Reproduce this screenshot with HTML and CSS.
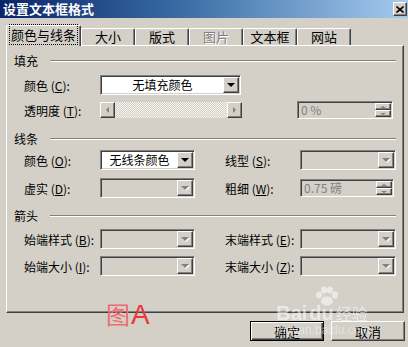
FILE: index.html
```html
<!DOCTYPE html>
<html lang="zh-CN">
<head>
    <meta charset="UTF-8">
    <title>设置文本框格式</title>
    <link rel="stylesheet" href="styles.css">
</head>
<body>

    <div class="titlebar">
        <span class="title">设置文本框格式</span>
        <span class="close">
            <svg width="8" height="7" viewBox="0 0 8 7"><path d="M0.5 0.5 L7.5 6.5 M7.5 0.5 L0.5 6.5" stroke="#000" stroke-width="1.6"/></svg>
        </span>
    </div>

    <div class="content">
        <div class="tabs">
            <div class="tab active"><span class="focus">颜色与线条</span></div>
            <div class="tab">大小</div>
            <div class="tab">版式</div>
            <div class="tab disabled">图片</div>
            <div class="tab">文本框</div>
            <div class="tab">网站</div>
        </div>

        <div class="panel">
            <!-- 填充 -->
            <div class="group-head"><span>填充</span><i class="rule"></i></div>
            <div class="row row-fill1">
                <label>颜色 (<u>C</u>):</label>
                <div class="combo wide">
                    <span class="value">无填充颜色</span>
                    <span class="drop"><i class="arrow-down"></i></span>
                </div>
            </div>
            <div class="row row-fill2">
                <label>透明度 (<u>T</u>):</label>
                <div class="slider">
                    <span class="btn"><i class="arrow-left"></i></span>
                    <span class="track"></span>
                    <span class="btn"><i class="arrow-right"></i></span>
                </div>
                <div class="spin fill-spin">
                    <span class="value">0 %</span>
                    <span class="arrows">
                        <span class="half"><i class="tiny-up"></i></span>
                        <span class="half"><i class="tiny-down"></i></span>
                    </span>
                </div>
            </div>

            <!-- 线条 -->
            <div class="group-head head-line"><span>线条</span><i class="rule"></i></div>
            <div class="grid row-line1">
                <label>颜色 (<u>O</u>):</label>
                <div class="combo">
                    <span class="value">无线条颜色</span>
                    <span class="drop"><i class="arrow-down"></i></span>
                </div>
                <label>线型 (<u>S</u>):</label>
                <div class="combo disabled">
                    <span class="value"></span>
                    <span class="drop"><i class="arrow-down"></i></span>
                </div>
            </div>
            <div class="grid row-line2">
                <label>虚实 (<u>D</u>):</label>
                <div class="combo disabled">
                    <span class="value"></span>
                    <span class="drop"><i class="arrow-down"></i></span>
                </div>
                <label>粗细 (<u>W</u>):</label>
                <div class="spin">
                    <span class="value">0.75 磅</span>
                    <span class="arrows">
                        <span class="half"><i class="tiny-up"></i></span>
                        <span class="half"><i class="tiny-down"></i></span>
                    </span>
                </div>
            </div>

            <!-- 箭头 -->
            <div class="group-head head-arrow"><span>箭头</span><i class="rule"></i></div>
            <div class="grid row-arrow1">
                <label>始端样式 (<u>B</u>):</label>
                <div class="combo disabled">
                    <span class="value"></span>
                    <span class="drop"><i class="arrow-down"></i></span>
                </div>
                <label>末端样式 (<u>E</u>):</label>
                <div class="combo disabled">
                    <span class="value"></span>
                    <span class="drop"><i class="arrow-down"></i></span>
                </div>
            </div>
            <div class="grid row-arrow2">
                <label>始端大小 (<u>I</u>):</label>
                <div class="combo disabled">
                    <span class="value"></span>
                    <span class="drop"><i class="arrow-down"></i></span>
                </div>
                <label>末端大小 (<u>Z</u>):</label>
                <div class="combo disabled">
                    <span class="value"></span>
                    <span class="drop"><i class="arrow-down"></i></span>
                </div>
            </div>
        </div>

        <div class="buttons">
            <button class="btn-default">确定</button>
            <button>取消</button>
        </div>
    </div>

    <!-- annotation and watermark over the dialog -->
    <div class="note"><span class="note-cn">图</span><span class="note-a">A</span></div>

    <div class="watermark">
        <svg class="paw" width="26" height="20" viewBox="0 0 26 20">
            <ellipse cx="5" cy="9" rx="3" ry="3.5" fill="#fff"/>
            <ellipse cx="10" cy="4" rx="3" ry="3.5" fill="#fff"/>
            <ellipse cx="16" cy="4" rx="3" ry="3.5" fill="#fff"/>
            <ellipse cx="21" cy="9" rx="3" ry="3.5" fill="#fff"/>
            <ellipse cx="13" cy="15" rx="6" ry="4.5" fill="#fff"/>
        </svg>
        <div class="wm-main"><b>Bai</b><b>du</b><span>经验</span></div>
        <div class="wm-url">jingyan.baidu.com</div>
    </div>

</body>
</html>
```

FILE: styles.css
```css
body {
    margin: 0;
    width: 408px;
    height: 347px;
    overflow: hidden;
    position: relative;
    background-color: #d4d0c8;
    font-family: "Noto Sans CJK SC", "Noto Sans", sans-serif;
    font-size: 12px;
    color: #000;
}

/* title bar */
.titlebar {
    height: 18px;
    display: flex;
    align-items: center;
    justify-content: space-between;
    padding: 0 1px 0 3px;
    background: linear-gradient(to right, #0a246a, #3a6ea5 45%, #a6caf0);
}

.title {
    color: #fff;
    font-weight: bold;
    font-size: 13px;
    line-height: 18px;
}

.close {
    width: 14px;
    height: 14px;
    box-sizing: border-box;
    display: flex;
    align-items: center;
    justify-content: center;
    background: #d4d0c8;
    border: 1px solid;
    border-color: #fff #404040 #404040 #fff;
    box-shadow: inset -1px -1px #808080;
}

.content {
    padding: 7px 3px 0 6px;
}

/* tabs */
.tabs {
    display: flex;
    align-items: flex-end;
    height: 20px;
}

.tab {
    position: relative;
    min-width: 54px;
    height: 17px;
    box-sizing: border-box;
    padding: 0 6px;
    border: 1px solid;
    border-bottom: none;
    border-color: #fff #404040 transparent #fff;
    border-radius: 2px 2px 0 0;
    box-shadow: inset -1px 0 #808080;
    text-align: center;
    font-size: 13px;
    line-height: 16px;
}

.tab.active {
    height: 21px;
    margin-bottom: -1px;
    padding: 0 3px;
    background: #d4d0c8;
    z-index: 1;
    line-height: 18px;
}

.tab .focus {
    outline: 1px dotted #000;
    padding: 0 1px;
}

.tab.disabled {
    color: #808080;
    text-shadow: 1px 1px #fff;
}

/* tab page */
.panel {
    width: 398px;
    height: 268px;
    box-sizing: border-box;
    padding: 8px 7px 0 7px;
    border: 1px solid;
    border-color: #fff #404040 #404040 #fff;
    box-shadow: inset -1px -1px #808080;
}

.group-head {
    display: flex;
    align-items: center;
    height: 14px;
}

.group-head span {
    width: 36px;
    line-height: 14px;
}

.rule {
    flex: 1;
    border-top: 1px solid #808080;
    border-bottom: 1px solid #fff;
}

.head-line { margin-top: 13px; }
.head-arrow { margin-top: 11px; }

.row {
    display: flex;
    align-items: center;
    padding-left: 10px;
}

.row label,
.grid label {
    width: 76px;
    white-space: nowrap;
}

.row-fill1 { margin-top: 7px; }
.row-fill2 { margin-top: 6px; }

.grid {
    display: grid;
    grid-template-columns: 76px 95px 30px 75px 96px;
    align-items: center;
    padding-left: 10px;
}

.grid label:nth-of-type(2) {
    grid-column: 4;
}

.row-line1 { margin-top: 4px; }
.row-line2 { margin-top: 8px; }
.row-arrow1 { margin-top: 6px; }
.row-arrow2 { margin-top: 7px; }

/* combo box */
.combo {
    display: flex;
    height: 20px;
    box-sizing: border-box;
    padding: 1px;
    border: 1px solid;
    border-color: #808080 #fff #fff #808080;
    box-shadow: inset 1px 1px #404040, inset -1px -1px #d4d0c8;
    background: #fff;
}

.combo.wide {
    width: 141px;
}

.combo .value {
    flex: 1;
    text-align: center;
    line-height: 16px;
}

.combo.disabled {
    background: #d4d0c8;
}

.drop {
    width: 16px;
    box-sizing: border-box;
    display: flex;
    align-items: center;
    justify-content: center;
    background: #d4d0c8;
    border: 1px solid;
    border-color: #fff #404040 #404040 #fff;
    box-shadow: inset -1px -1px #808080;
}

.arrow-down {
    width: 0;
    height: 0;
    border-left: 4px solid transparent;
    border-right: 4px solid transparent;
    border-top: 4px solid #000;
}

.disabled .arrow-down {
    border-top-color: #808080;
    filter: drop-shadow(1px 1px 0 #fff);
}

/* slider */
.slider {
    display: flex;
    width: 142px;
    height: 16px;
}

.slider .btn {
    width: 15px;
    box-sizing: border-box;
    display: flex;
    align-items: center;
    justify-content: center;
    background: #d4d0c8;
    border: 1px solid;
    border-color: #fff #404040 #404040 #fff;
    box-shadow: inset -1px -1px #808080;
}

.slider .track {
    flex: 1;
    background: repeating-conic-gradient(#f4f3f0 0 25%, #d4d0c8 0 50%) 0 0 / 2px 2px;
}

.arrow-left,
.arrow-right {
    width: 0;
    height: 0;
    border-top: 3px solid transparent;
    border-bottom: 3px solid transparent;
}

.arrow-left { border-right: 3px solid #808080; }
.arrow-right { border-left: 3px solid #808080; }

/* spinner */
.spin {
    display: flex;
    width: 94px;
    height: 18px;
    box-sizing: border-box;
    padding: 1px;
    border: 1px solid;
    border-color: #808080 #fff #fff #808080;
    box-shadow: inset 1px 1px #404040, inset -1px -1px #d4d0c8;
    background: #d4d0c8;
}

.fill-spin {
    width: 96px;
    margin-left: 55px;
}

.spin .value {
    flex: 1;
    color: #808080;
    padding-left: 2px;
    line-height: 14px;
}

.spin .arrows {
    width: 16px;
    display: flex;
    flex-direction: column;
}

.spin .half {
    flex: 1;
    box-sizing: border-box;
    display: flex;
    align-items: center;
    justify-content: center;
    background: #d4d0c8;
    border: 1px solid;
    border-color: #fff #404040 #404040 #fff;
    box-shadow: inset -1px -1px #808080;
}

.tiny-up,
.tiny-down {
    width: 0;
    height: 0;
    border-left: 3px solid transparent;
    border-right: 3px solid transparent;
}

.tiny-up { border-bottom: 2px solid #808080; }
.tiny-down { border-top: 2px solid #808080; }

/* dialog buttons */
.buttons {
    display: flex;
    justify-content: flex-end;
    gap: 7px;
    margin-top: 8px;
}

button {
    width: 74px;
    height: 20px;
    padding: 0;
    background: #d4d0c8;
    font-family: "Noto Sans CJK SC", "Noto Sans", sans-serif;
    font-size: 13px;
    color: #000;
    border: 1px solid;
    border-color: #fff #404040 #404040 #fff;
    box-shadow: inset -1px -1px #808080;
}

button.btn-default {
    border: 1px solid #000;
    box-shadow: inset 1px 1px #fff, inset -1px -1px #404040, inset -2px -2px #808080;
}

/* red note */
.note {
    position: absolute;
    left: 106px;
    top: 296px;
    display: flex;
    align-items: baseline;
    color: #e8383d;
}

.note-cn {
    font-size: 24px;
    color: #ee6a70;
}

.note-a {
    font-family: "Liberation Sans", Arial, sans-serif;
    font-size: 28px;
    margin-left: 1px;
}

/* watermark */
.watermark {
    position: absolute;
    left: 262px;
    top: 286px;
    width: 120px;
    opacity: 0.55;
    color: #fff;
    text-align: center;
}

.paw {
    display: block;
    margin: 0 auto -3px 52px;
}

.wm-main {
    font-family: "Liberation Sans", Arial, sans-serif;
    font-size: 20px;
    font-weight: bold;
    line-height: 20px;
}

.wm-main b + b {
    margin-left: 2px;
}

.wm-main span {
    font-family: "Noto Sans CJK SC", sans-serif;
    font-size: 16px;
    font-weight: normal;
    margin-left: 2px;
}

.wm-url {
    font-family: "Liberation Sans", Arial, sans-serif;
    font-size: 12px;
    line-height: 14px;
    color: #f0f0f0;
}
```
